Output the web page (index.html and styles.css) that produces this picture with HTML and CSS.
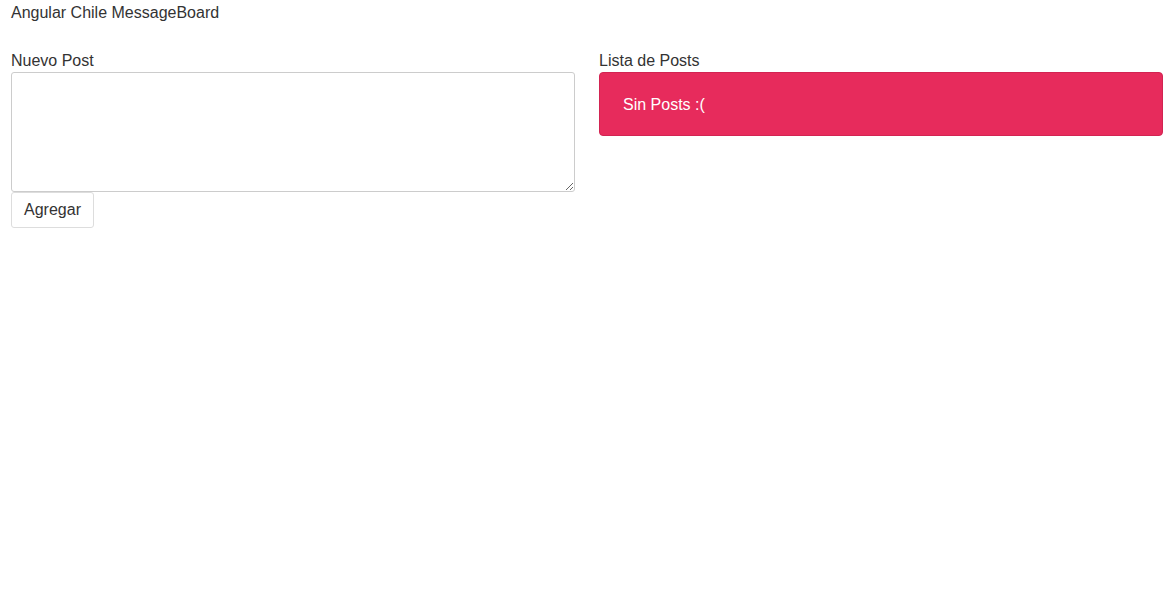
FILE: index.html
```html
<!DOCTYPE html>
<html lang="es">
<head>
<meta charset="utf-8">
<title>Angular Chile MessageBoard</title>
<link rel="stylesheet" href="styles.css">
</head>
<body>
<div class="app">
  <header class="brand">Angular Chile MessageBoard</header>
  <main class="columns">
    <section class="col">
      <label class="label" for="post">Nuevo Post</label>
      <textarea id="post" class="textarea"></textarea>
      <div><button class="btn" type="button">Agregar</button></div>
    </section>
    <section class="col">
      <div class="label">Lista de Posts</div>
      <div class="alert">Sin Posts :(</div>
    </section>
  </main>
</div>
</body>
</html>
```
FILE: styles.css
```css
html, body {
  margin: 0;
  padding: 0;
  background: #fff;
}
body {
  font-family: "Liberation Sans", Arial, sans-serif;
  font-size: 16px;
  line-height: 24px;
  color: #333;
}
.app {
  padding: 0 13px 0 11px;
}
.brand {
  padding-top: 1px;
  height: 24px;
  line-height: 24px;
}
.columns {
  margin-top: 23px;
  display: grid;
  grid-template-columns: 1fr 1fr;
  column-gap: 24px;
}
.col {
  display: flex;
  flex-direction: column;
}
.label {
  display: block;
  box-sizing: border-box;
  line-height: 22px;
  padding-top: 2px;
  height: 24px;
  color: #333;
}
.textarea {
  box-sizing: border-box;
  width: 100%;
  height: 120px;
  margin: 0;
  border: 1px solid #ccc;
  border-radius: 3px;
  font-family: inherit;
  font-size: 16px;
  resize: vertical;
  display: block;
}
.btn {
  box-sizing: border-box;
  height: 36px;
  width: 83px;
  margin: 0;
  background: #fff;
  border: 1px solid #ddd;
  border-radius: 3px;
  font-family: inherit;
  font-size: 16px;
  color: #333;
  padding: 0;
  display: block;
}
.alert {
  box-sizing: border-box;
  height: 64px;
  padding: 21px 23px 19px;
  line-height: 22px;
  background: #e72b5c;
  border: 1px solid #d22452;
  border-radius: 4px;
  color: #fff;
}
```
